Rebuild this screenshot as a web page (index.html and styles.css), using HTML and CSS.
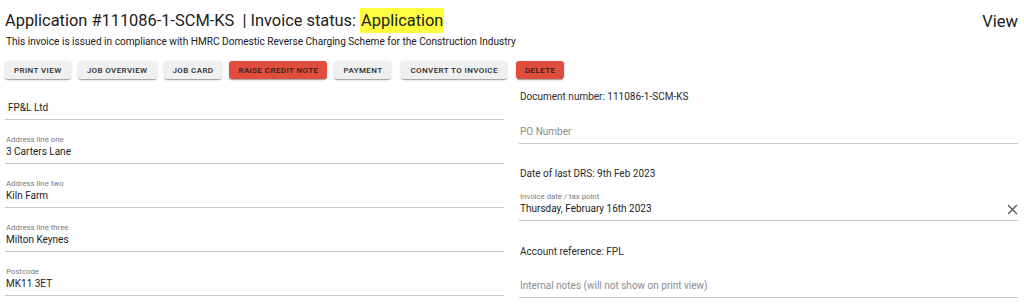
FILE: index.html
```html
<!DOCTYPE html>
<html lang="en">
<head>
<meta charset="utf-8">
<title>Application #111086-1-SCM-KS</title>
<link rel="stylesheet" href="styles.css">
</head>
<body>
<div class="page">
  <div class="title-row">
    <h1 class="title">Application #111086-1-SCM-KS&nbsp; | Invoice status: <span class="status">Application</span></h1>
    <div class="mode">View</div>
  </div>
  <p class="subtitle">This invoice is issued in compliance with HMRC Domestic Reverse Charging Scheme for the Construction Industry</p>

  <div class="actions">
    <button class="btn">Print view</button>
    <button class="btn">Job overview</button>
    <button class="btn">Job card</button>
    <button class="btn btn-red">Raise credit note</button>
    <button class="btn">Payment</button>
    <button class="btn btn-convert">Convert to invoice</button>
    <button class="btn btn-red btn-delete">Delete</button>
  </div>

  <div class="columns">
    <div class="col col-left">
      <div class="field">
        <div class="label"></div>
        <div class="value indent">FP&amp;L Ltd</div>
      </div>
      <div class="field">
        <div class="label">Address line one</div>
        <div class="value">3 Carters Lane</div>
      </div>
      <div class="field">
        <div class="label">Address line two</div>
        <div class="value">Kiln Farm</div>
      </div>
      <div class="field">
        <div class="label">Address line three</div>
        <div class="value">Milton Keynes</div>
      </div>
      <div class="field">
        <div class="label">Postcode</div>
        <div class="value">MK11 3ET</div>
      </div>
    </div>

    <div class="col col-right">
      <div class="info">Document number: 111086-1-SCM-KS</div>
      <div class="field field-spaced">
        <div class="label"></div>
        <div class="value placeholder">PO Number</div>
      </div>
      <div class="info">Date of last DRS: 9th Feb 2023</div>
      <div class="field field-spaced">
        <div class="label">Invoice date / tax point</div>
        <div class="value value-icon">
          <span>Thursday, February 16th 2023</span>
          <svg class="clear" viewBox="0 0 24 24" aria-hidden="true"><path d="M19 6.41 17.59 5 12 10.59 6.41 5 5 6.41 10.59 12 5 17.59 6.41 19 12 13.41 17.59 19 19 17.59 13.41 12z"/></svg>
        </div>
      </div>
      <div class="info info-last">Account reference: FPL</div>
      <div class="field">
        <div class="label"></div>
        <div class="value placeholder">Internal notes (will not show on print view)</div>
      </div>
    </div>
  </div>
</div>
</body>
</html>
```

FILE: styles.css
```css
* { box-sizing: border-box; }

html, body {
  margin: 0;
  padding: 0;
  background: #ffffff;
  font-family: Roboto, "Liberation Sans", Arial, sans-serif;
  color: rgba(0, 0, 0, 0.87);
}

.page {
  padding: 7px 6px 0 5px;
}

.title-row {
  display: flex;
  justify-content: space-between;
  align-items: center;
}

.title {
  margin: 0;
  font-size: 16.4px;
  font-weight: 400;
  line-height: 25px;
  color: #212121;
}

.status {
  display: inline-block;
  background: #ffff3f;
  padding: 0 1px;
  line-height: 25px;
}

.mode {
  font-size: 16.5px;
  line-height: 25px;
  color: #212121;
  margin-top: 2px;
}

.subtitle {
  margin: 1px 0 0 1px;
  font-size: 10.1px;
  line-height: 14px;
  color: #212121;
}

.actions {
  display: flex;
  gap: 7px;
  margin-top: 12px;
}

.btn {
  height: 18px;
  padding: 0 9px;
  border: none;
  border-radius: 3px;
  background: #f0f0f0;
  color: #2a2a2a;
  font-family: Roboto, "Liberation Sans", Arial, sans-serif;
  font-size: 8px;
  font-weight: 500;
  letter-spacing: 0.4px;
  text-transform: uppercase;
  box-shadow: 0 2px 1px -1px rgba(0,0,0,0.2), 0 1px 1px 0 rgba(0,0,0,0.14), 0 1px 3px 0 rgba(0,0,0,0.12);
  cursor: pointer;
}

.btn-red {
  background: #e14d3c;
  color: #1e1e1e;
}

.btn-convert { margin-left: 3px; }
.btn-delete { margin-left: 2px; }

.columns {
  display: grid;
  grid-template-columns: 1fr 1fr;
  column-gap: 15px;
  margin-top: 9px;
  align-items: start;
}

.col {
  display: flex;
  flex-direction: column;
}

.col-left { padding-top: 3px; }
.col-right { padding-top: 1px; }

.field {
  border-bottom: 1px solid #c8c8c8;
  padding-bottom: 3px;
  margin-bottom: 15px;
}

.field-spaced { margin-bottom: 22px; }

.label {
  height: 9px;
  font-size: 7.8px;
  line-height: 9px;
  color: #7a7a7a;
  padding-left: 1px;
}

.value {
  height: 16px;
  font-size: 10px;
  line-height: 16px;
  color: #212121;
  padding-left: 1px;
}

.indent { padding-left: 3px; }

.placeholder { color: #8c8c8c; }

.value-icon {
  display: flex;
  justify-content: space-between;
  align-items: center;
}

.clear {
  width: 17px;
  height: 17px;
  fill: #5c5c5c;
  margin-right: -3px;
}

.info {
  height: 16px;
  font-size: 10px;
  line-height: 16px;
  color: #2a2a2a;
  padding-left: 1px;
  margin-bottom: 10px;
}

.info-last { margin-top: 1px; margin-bottom: 9px; }
```
